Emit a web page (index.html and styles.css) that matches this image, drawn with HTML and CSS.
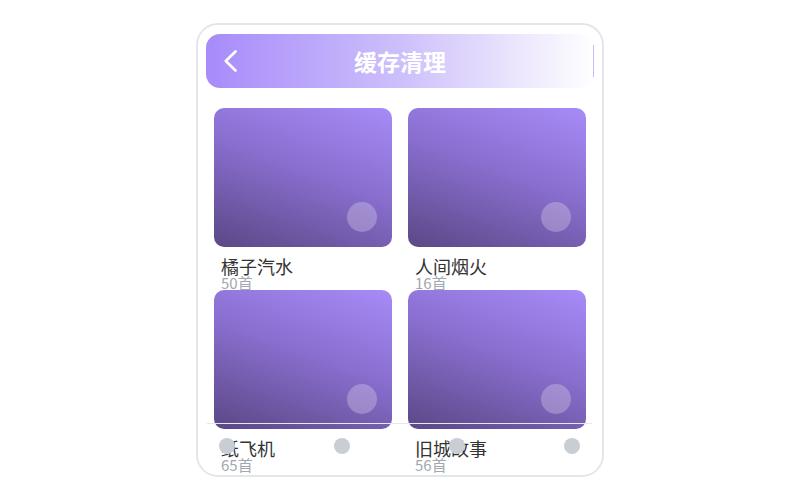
FILE: index.html
```html
<!DOCTYPE html>
<html lang="zh-CN">

<head>
    <meta charset="UTF-8">
    <meta name="viewport" content="width=device-width, initial-scale=1.0">
    <title>缓存清理</title>
    <link rel="stylesheet" href="styles.css">
</head>

<body>
    <div class="phone">
        <div class="header">
            <div class="back">
                <svg width="14" height="22" viewBox="0 0 14 22">
                    <polyline points="11.5,1.5 1.8,11 11.5,20.5" fill="none" stroke="#fff" stroke-width="2.6"
                        stroke-linecap="round" stroke-linejoin="round" />
                </svg>
            </div>
            <h1 class="title">缓存清理</h1>
            <div class="header-right"><span class="edge"></span></div>
        </div>

        <div class="album-grid">
            <div class="album">
                <div class="cover"><span class="play"></span></div>
                <div class="name">橘子汽水</div>
                <div class="count">50首</div>
            </div>
            <div class="album">
                <div class="cover"><span class="play"></span></div>
                <div class="name">人间烟火</div>
                <div class="count">16首</div>
            </div>
            <div class="album">
                <div class="cover"><span class="play"></span></div>
                <div class="name">纸飞机</div>
                <div class="count">65首</div>
            </div>
            <div class="album">
                <div class="cover"><span class="play"></span></div>
                <div class="name">旧城故事</div>
                <div class="count">56首</div>
            </div>
        </div>

        <div class="tabbar">
            <span class="dot"></span>
            <span class="dot"></span>
            <span class="dot"></span>
            <span class="dot"></span>
        </div>
    </div>
</body>

</html>
```

FILE: styles.css
```css
body {
    margin: 0;
    padding: 0;
    background-color: #fff;
    font-family: "Noto Sans CJK SC", "Noto Sans", sans-serif;
}

.phone {
    position: relative;
    box-sizing: border-box;
    width: 408px;
    height: 454px;
    margin: 23px auto 0;
    padding: 9px 8px 8px;
    border: 2px solid #e6e6ea;
    border-radius: 22px;
    overflow: hidden;
}

.header {
    display: flex;
    align-items: center;
    height: 54px;
    padding: 0 0 0 18px;
    border-radius: 14px;
    background: linear-gradient(to right, #a78bfa, #cdbffb 50%, #ffffff);
}

.back {
    width: 40px;
    display: flex;
    align-items: center;
}

.back svg {
    display: block;
}

.title {
    flex: 1;
    margin: 0;
    text-align: center;
    font-size: 23px;
    font-weight: bold;
    color: #fff;
}

.header-right {
    width: 58px;
    display: flex;
    justify-content: flex-end;
}

.edge {
    width: 1px;
    height: 32px;
    background-color: #c9b8fc;
}

.album-grid {
    display: grid;
    grid-template-columns: 1fr 1fr;
    column-gap: 16px;
    padding: 20px 8px 0;
}

.album {
    height: 182px;
}

.cover {
    position: relative;
    height: 139px;
    border-radius: 10px;
    background: linear-gradient(200deg, #a78bf8, #8a6fd0 45%, #5a4886);
}

.play {
    position: absolute;
    right: 15px;
    bottom: 15px;
    width: 30px;
    height: 30px;
    border-radius: 50%;
    background-color: rgba(255, 255, 255, 0.25);
}

.name {
    margin-top: 9px;
    padding-left: 7px;
    font-size: 18px;
    line-height: 20px;
    color: #333;
}

.count {
    padding-left: 7px;
    font-size: 15px;
    line-height: 14px;
    color: #a3a8b0;
}

.tabbar {
    position: absolute;
    left: 9px;
    right: 10px;
    bottom: 7px;
    height: 44px;
    padding: 0 12px;
    display: flex;
    justify-content: space-between;
    align-items: center;
    border-top: 1px solid #e8e8ec;
}

.dot {
    width: 16px;
    height: 16px;
    border-radius: 50%;
    background-color: #c9cdd4;
}
```
